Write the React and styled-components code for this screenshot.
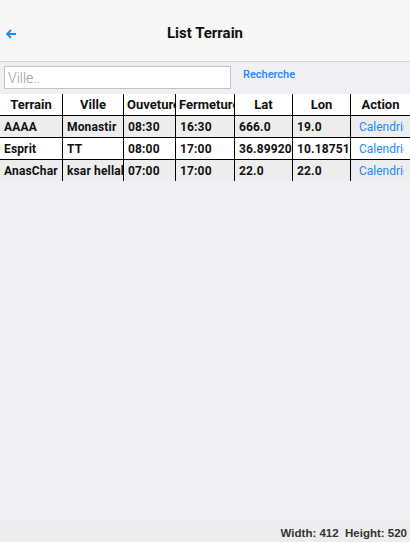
import styled, { createGlobalStyle } from 'styled-components';

const GlobalStyle = createGlobalStyle`
  html, body {
    margin: 0;
    padding: 0;
    height: 100%;
  }
  body {
    font-family: Roboto, "Liberation Sans", sans-serif;
    background: #efeff4;
  }
  #root {
    height: 100%;
  }
`;

const rows = [
  { name: 'AAAA', ville: 'Monastir', open: '08:30', close: '16:30', lat: '666.0', lon: '19.0' },
  { name: 'Esprit', ville: 'TT', open: '08:00', close: '17:00', lat: '36.899207', lon: '10.187512' },
  { name: 'AnasChar', ville: 'ksar hellal', open: '07:00', close: '17:00', lat: '22.0', lon: '22.0' },
];

const columns = ['Terrain', 'Ville', 'Ouveture', 'Fermeture', 'Lat', 'Lon', 'Action'];

const ListTerrain = () => {
  return (
    <>
      <GlobalStyle />
      <StPage>
        <StToolbar>
          <StBack type="button">
            <svg width="11" height="10" viewBox="0 0 11 10">
              <path d="M5 1 L1 5 L5 9 M1 5 H10" stroke="#1e88ff" strokeWidth="1.8" fill="none" />
            </svg>
          </StBack>
          <StTitle>List Terrain</StTitle>
        </StToolbar>

        <StSearchRow>
          <StInput placeholder="Ville.." />
          <StSearchButton type="button">Recherche</StSearchButton>
        </StSearchRow>

        <StTable>
          {columns.map((c) => (
            <StHeadCell key={c}>{c}</StHeadCell>
          ))}
          {rows.map((r, i) => (
            <StRowGroup key={r.name}>
              <StCell $odd={i % 2 === 0}>{r.name}</StCell>
              <StCell $odd={i % 2 === 0}>{r.ville}</StCell>
              <StCell $odd={i % 2 === 0}>{r.open}</StCell>
              <StCell $odd={i % 2 === 0}>{r.close}</StCell>
              <StCell $odd={i % 2 === 0}>{r.lat}</StCell>
              <StCell $odd={i % 2 === 0}>{r.lon}</StCell>
              <StActionCell $odd={i % 2 === 0}>
                <StActionLink>Calendrier</StActionLink>
              </StActionCell>
            </StRowGroup>
          ))}
        </StTable>

        <StSpacer />

        <StStatusBar>Width: 412&nbsp; Height: 520</StStatusBar>
      </StPage>
    </>
  );
};

export default ListTerrain;

// ================= styled-components =================

const StPage = styled.div`
  height: 100%;
  display: flex;
  flex-direction: column;
`;

const StToolbar = styled.header`
  height: 62px;
  flex-shrink: 0;
  background: #f7f7f7;
  border-bottom: 1px solid #d4d4d6;
  display: flex;
  align-items: center;
  justify-content: center;
  position: relative;
  padding-top: 4px;
  box-sizing: border-box;
`;

const StBack = styled.button`
  position: absolute;
  left: 4px;
  top: 27px;
  border: none;
  background: none;
  padding: 2px;
  display: flex;
`;

const StTitle = styled.h1`
  margin: 0;
  font-size: 15px;
  font-weight: 700;
  color: #111;
`;

const StSearchRow = styled.div`
  display: flex;
  align-items: flex-start;
  padding: 4px 0 0 4px;
  gap: 12px;
`;

const StInput = styled.input`
  width: 227px;
  height: 23px;
  box-sizing: border-box;
  border: 1px solid #c2c2c2;
  background: #fff;
  font-family: Roboto, "Liberation Sans", sans-serif;
  font-size: 14px;
  font-weight: 300;
  padding: 0 3px;
  outline: none;
  caret-color: #000;

  &::placeholder {
    color: #9a9a9a;
  }
`;

const StSearchButton = styled.button`
  border: none;
  background: none;
  padding: 0;
  margin-top: 2px;
  font-family: Roboto, "Liberation Sans", sans-serif;
  font-size: 11px;
  font-weight: 500;
  color: #1e88ff;
`;

const StTable = styled.div`
  margin-top: 5px;
  display: grid;
  grid-template-columns: 63px 61px 52px 59px 58px 58px 1fr;
  background: #fff;
`;

const StRowGroup = styled.div`
  display: contents;
`;

const StHeadCell = styled.div`
  height: 21px;
  line-height: 21px;
  padding: 0 3px;
  text-align: center;
  font-size: 13px;
  font-weight: 700;
  color: #111;
  border-right: 1px solid #000;
  overflow: hidden;
  white-space: nowrap;

  &:nth-child(7) {
    border-right: none;
  }
`;

const StCell = styled.div`
  height: 22px;
  box-sizing: border-box;
  border-top: 1px solid #000;
  border-right: 1px solid #000;
  background: ${({ $odd }) => ($odd ? '#ededed' : '#fff')};
  display: flex;
  align-items: center;
  padding-left: 4px;
  font-size: 12px;
  font-weight: 700;
  letter-spacing: 0.15px;
  color: #111;
  overflow: hidden;
  white-space: nowrap;
`;

const StActionCell = styled(StCell)`
  border-right: none;
  padding-left: 8px;
  font-weight: 400;
  letter-spacing: 0;
  color: #1e88ff;
`;

const StActionLink = styled.span`
  max-width: 45px;
  overflow: hidden;
  cursor: pointer;
`;

const StSpacer = styled.div`
  flex: 1;
`;

const StStatusBar = styled.footer`
  height: 22px;
  flex-shrink: 0;
  background: #ededed;
  display: flex;
  align-items: center;
  justify-content: flex-end;
  padding-right: 3px;
  padding-top: 3px;
  box-sizing: border-box;
  font-family: "Liberation Sans", Arial, sans-serif;
  font-size: 11.5px;
  font-weight: 700;
  color: #333;
`;
